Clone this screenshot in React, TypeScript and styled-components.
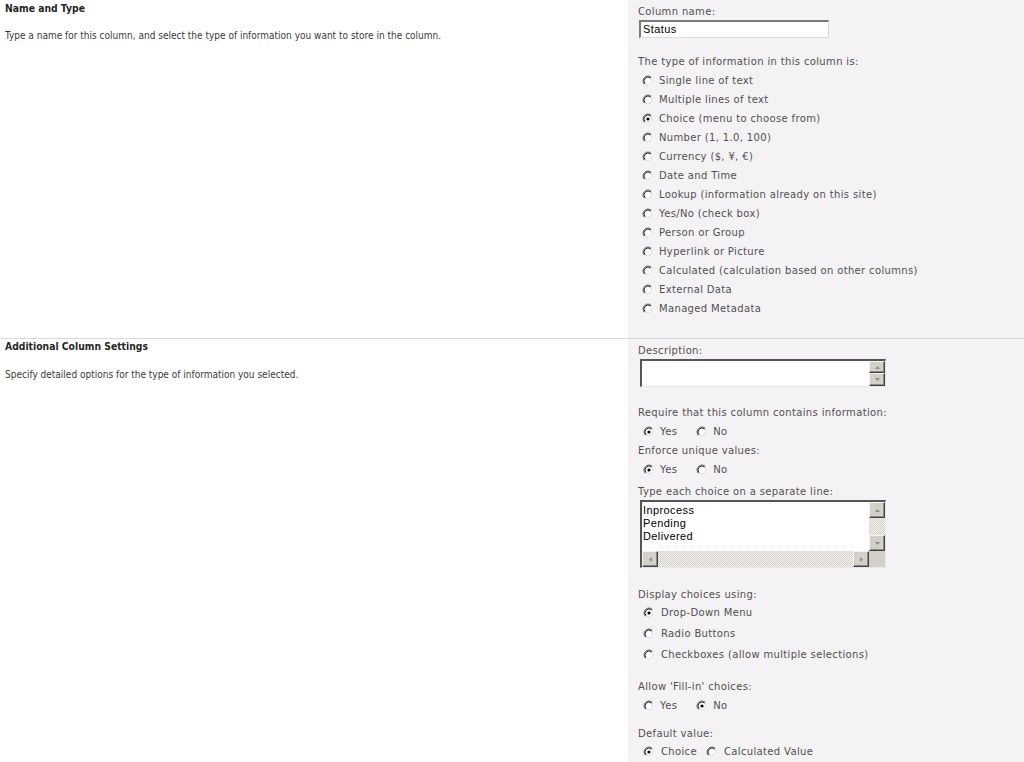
import styled, { createGlobalStyle } from "styled-components";

const GlobalStyle = createGlobalStyle`
  body {
    margin: 0;
    background: #fff;
  }
`;

const Page = styled.div`
  width: 1024px;
  min-height: 762px;
  display: flex;
  flex-direction: column;
  overflow: hidden;
`;

const Section = styled.div<{ $grow?: boolean; $divider?: boolean }>`
  display: grid;
  grid-template-columns: 628px 1fr;
  flex: ${(p) => (p.$grow ? 1 : "none")};
  border-top: ${(p) => (p.$divider ? "1px solid #d9d9d9" : "none")};
`;

const Side = styled.div<{ $top: number }>`
  padding: ${(p) => p.$top}px 5px 0;
  font-family: "DejaVu Sans Condensed", "DejaVu Sans", sans-serif;
  color: #3a3a3a;
`;

const Heading = styled.div`
  font-weight: bold;
  font-size: 10.3px;
  line-height: 12px;
  color: #262626;
`;

const Help = styled.div<{ $mt: number }>`
  margin-top: ${(p) => p.$mt}px;
  font-size: 10px;
  line-height: 12px;
`;

const Panel = styled.div<{ $top: number; $bottom: number }>`
  background: #f5f2f5;
  padding: ${(p) => p.$top}px 10px ${(p) => p.$bottom}px;
  font-family: "DejaVu Sans", Verdana, sans-serif;
  font-size: 10px;
  letter-spacing: 0.35px;
  color: #505050;
`;

const Label = styled.div<{ $mt?: number }>`
  margin-top: ${(p) => p.$mt ?? 0}px;
  line-height: 12px;
  white-space: nowrap;
`;

const TextInput = styled.div`
  margin: 2px 0 0 1px;
  width: 190px;
  height: 18px;
  box-sizing: border-box;
  background: #fff;
  border-style: solid;
  border-width: 2px 1px 1px 2px;
  border-color: #7a7a7a #dcdcdc #dcdcdc #7a7a7a;
  padding-left: 2px;
  font-family: "Liberation Sans", Arial, sans-serif;
  font-size: 11px;
  letter-spacing: 0.4px;
  line-height: 14px;
  color: #000;
`;

const RadioList = styled.div<{ $mt: number }>`
  margin-top: ${(p) => p.$mt}px;
  display: flex;
  flex-direction: column;
`;

const RadioRow = styled.div<{ $h: number; $indent: number }>`
  height: ${(p) => p.$h}px;
  display: flex;
  align-items: center;
  padding-left: ${(p) => p.$indent}px;
  white-space: nowrap;
`;

const Option = styled.span<{ $gap: number; $after?: number }>`
  display: inline-flex;
  align-items: center;
  gap: ${(p) => p.$gap}px;
  margin-right: ${(p) => p.$after ?? 0}px;
`;

const Dot = styled.svg`
  width: 12px;
  height: 12px;
  flex: none;
`;

function Radio({ checked }: { checked?: boolean }) {
  return (
    <Dot viewBox="0 0 12 12">
      <circle cx="6" cy="6" r="3.6" fill="#fff" />
      <path d="M2.46 9.54 A5 5 0 0 1 9.54 2.46" fill="none" stroke="#707070" strokeWidth="1" />
      <path d="M3.17 8.83 A4 4 0 0 1 8.83 3.17" fill="none" stroke="#222" strokeWidth="1" />
      <path d="M9.54 2.46 A5 5 0 0 1 2.46 9.54" fill="none" stroke="#ffffff" strokeWidth="1" />
      <path d="M8.83 3.17 A4 4 0 0 1 3.17 8.83" fill="none" stroke="#dedad2" strokeWidth="1" />
      {checked && <circle cx="6" cy="6" r="1.6" fill="#000" />}
    </Dot>
  );
}

const AreaFrame = styled.div<{ $w: number; $h: number; $hScroll?: boolean }>`
  margin: 2px 0 0 2px;
  width: ${(p) => p.$w}px;
  height: ${(p) => p.$h}px;
  box-sizing: border-box;
  border-style: solid;
  border-width: 2px 1px 1px 2px;
  border-color: #555 #e8e8e8 #e8e8e8 #555;
  display: grid;
  grid-template-columns: 1fr 16px;
  grid-template-rows: ${(p) => (p.$hScroll ? "1fr 16px" : "1fr")};
  background: #fff;
`;

const AreaText = styled.div`
  padding: 2px 1px;
  font-family: "Liberation Sans", Arial, sans-serif;
  font-size: 11px;
  letter-spacing: 0.4px;
  line-height: 13px;
  color: #000;
  overflow: hidden;
`;

const VBar = styled.div`
  display: flex;
  flex-direction: column;
`;

const HBar = styled.div`
  display: flex;
`;

const Track = styled.div`
  flex: 1;
  background: repeating-conic-gradient(#d4d0c8 0 25%, #f4f3ef 0 50%) 0 0 / 2px 2px;
`;

const ScrollBtn = styled.div<{ $size: number }>`
  flex: none;
  width: 16px;
  height: ${(p) => p.$size}px;
  box-sizing: border-box;
  background: #d4d0c8;
  border-style: solid;
  border-width: 1px;
  border-color: #f4f4f4 #404040 #404040 #f4f4f4;
  box-shadow: inset -1px -1px 0 #8c8c8c;
  display: flex;
  align-items: center;
  justify-content: center;
`;

const Corner = styled.div`
  background: #d4d0c8;
`;

const Arrow = styled.svg`
  width: 7px;
  height: 7px;
`;

const arrows: Record<string, string> = {
  up: "M1 5 L6 5 L3.5 2 Z",
  down: "M1 2 L6 2 L3.5 5 Z",
  left: "M5 1 L5 6 L2 3.5 Z",
  right: "M2 1 L2 6 L5 3.5 Z",
};

function Btn({ dir, size = 16 }: { dir: string; size?: number }) {
  return (
    <ScrollBtn $size={size}>
      <Arrow viewBox="0 0 7 7">
        <path d={arrows[dir]} fill="#8c8c8c" />
      </Arrow>
    </ScrollBtn>
  );
}

function FakeTextArea({
  height,
  lines = [],
  hScroll,
}: {
  height: number;
  lines?: string[];
  hScroll?: boolean;
}) {
  const inner = height - 3 - (hScroll ? 16 : 0);
  const small = inner < 32;
  return (
    <AreaFrame $w={246} $h={height} $hScroll={hScroll}>
      <AreaText>
        {lines.map((l) => (
          <div key={l}>{l}</div>
        ))}
      </AreaText>
      <VBar>
        <Btn dir="up" size={small ? Math.floor(inner / 2) : 16} />
        <Track />
        <Btn dir="down" size={small ? Math.ceil(inner / 2) : 16} />
      </VBar>
      {hScroll && (
        <>
          <HBar>
            <Btn dir="left" />
            <Track />
            <Btn dir="right" />
          </HBar>
          <Corner />
        </>
      )}
    </AreaFrame>
  );
}

const types = [
  "Single line of text",
  "Multiple lines of text",
  "Choice (menu to choose from)",
  "Number (1, 1.0, 100)",
  "Currency ($, ¥, €)",
  "Date and Time",
  "Lookup (information already on this site)",
  "Yes/No (check box)",
  "Person or Group",
  "Hyperlink or Picture",
  "Calculated (calculation based on other columns)",
  "External Data",
  "Managed Metadata",
];

const displayModes = [
  "Drop-Down Menu",
  "Radio Buttons",
  "Checkboxes (allow multiple selections)",
];

function YesNo({ yes }: { yes: boolean }) {
  return (
    <RadioRow $h={19} $indent={5}>
      <Option $gap={5} $after={19}>
        <Radio checked={yes} />
        Yes
      </Option>
      <Option $gap={5}>
        <Radio checked={!yes} />
        No
      </Option>
    </RadioRow>
  );
}

export default function App() {
  return (
    <>
      <GlobalStyle />
      <Page>
        <Section>
          <Side $top={2}>
            <Heading>Name and Type</Heading>
            <Help $mt={16}>
              Type a name for this column, and select the type of information you want to store in
              the column.
            </Help>
          </Side>
          <Panel $top={6} $bottom={20}>
            <Label>Column name:</Label>
            <TextInput>Status</TextInput>
            <Label $mt={18}>The type of information in this column is:</Label>
            <RadioList $mt={3}>
              {types.map((t, i) => (
                <RadioRow key={t} $h={19} $indent={4}>
                  <Option $gap={5}>
                    <Radio checked={i === 2} />
                    {t}
                  </Option>
                </RadioRow>
              ))}
            </RadioList>
          </Panel>
        </Section>

        <Section $divider $grow>
          <Side $top={1}>
            <Heading>Additional Column Settings</Heading>
            <Help $mt={17}>Specify detailed options for the type of information you selected.</Help>
          </Side>
          <Panel $top={6} $bottom={0}>
            <Label>Description:</Label>
            <FakeTextArea height={28} />

            <Label $mt={20}>Require that this column contains information:</Label>
            <RadioList $mt={3}>
              <YesNo yes />
            </RadioList>

            <Label $mt={4}>Enforce unique values:</Label>
            <RadioList $mt={3}>
              <YesNo yes />
            </RadioList>

            <Label $mt={7}>Type each choice on a separate line:</Label>
            <FakeTextArea height={68} lines={["Inprocess", "Pending", "Delivered"]} hScroll />

            <Label $mt={21}>Display choices using:</Label>
            <RadioList $mt={1}>
              {displayModes.map((m, i) => (
                <RadioRow key={m} $h={21} $indent={5}>
                  <Option $gap={6}>
                    <Radio checked={i === 0} />
                    {m}
                  </Option>
                </RadioRow>
              ))}
            </RadioList>

            <Label $mt={16}>Allow 'Fill-in' choices:</Label>
            <RadioList $mt={3}>
              <YesNo yes={false} />
            </RadioList>

            <Label $mt={13}>Default value:</Label>
            <RadioList $mt={2}>
              <RadioRow $h={19} $indent={5}>
                <Option $gap={6} $after={9}>
                  <Radio checked />
                  Choice
                </Option>
                <Option $gap={6}>
                  <Radio />
                  Calculated Value
                </Option>
              </RadioRow>
            </RadioList>
          </Panel>
        </Section>
      </Page>
    </>
  );
}
